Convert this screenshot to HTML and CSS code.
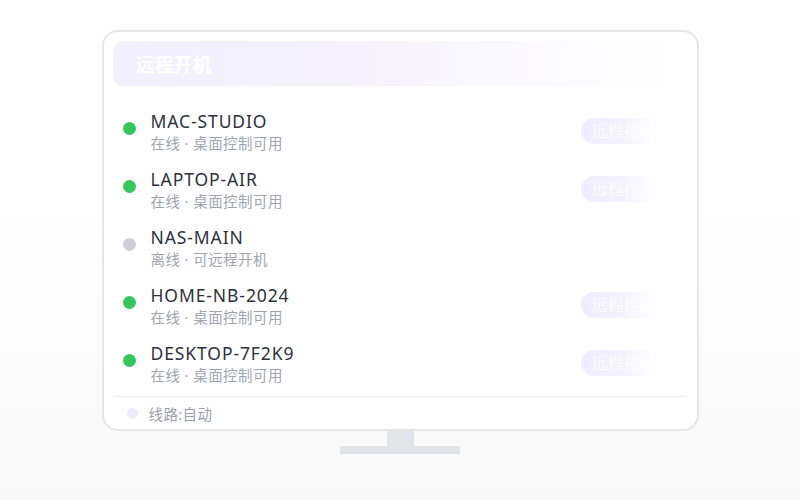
FILE: index.html
```html
<!DOCTYPE html>
<html lang="zh">
<head>
<meta charset="utf-8">
<link rel="stylesheet" href="styles.css">
</head>
<body>
<div class="stage">
  <div class="monitor">
    <div class="header">
      <span class="title">远程开机</span>
      <span class="count">4/5 在线</span>
    </div>
    <div class="list">
      <div class="row">
        <span class="dot on"></span>
        <div class="info"><div class="name">MAC-STUDIO</div><div class="sub">在线 · 桌面控制可用</div></div>
        <span class="btn">远程控制</span>
      </div>
      <div class="row">
        <span class="dot on"></span>
        <div class="info"><div class="name">LAPTOP-AIR</div><div class="sub">在线 · 桌面控制可用</div></div>
        <span class="btn">远程控制</span>
      </div>
      <div class="row">
        <span class="dot off"></span>
        <div class="info"><div class="name">NAS-MAIN</div><div class="sub">离线 · 可远程开机</div></div>
      </div>
      <div class="row">
        <span class="dot on"></span>
        <div class="info"><div class="name">HOME-NB-2024</div><div class="sub">在线 · 桌面控制可用</div></div>
        <span class="btn">远程控制</span>
      </div>
      <div class="row">
        <span class="dot on"></span>
        <div class="info"><div class="name">DESKTOP-7F2K9</div><div class="sub">在线 · 桌面控制可用</div></div>
        <span class="btn">远程控制</span>
      </div>
    </div>
    <div class="footer">
      <span class="fdot"></span>
      <span class="ftext">线路:自动</span>
    </div>
  </div>
  <div class="neck"></div>
  <div class="base"></div>
</div>
</body>
</html>
```

FILE: styles.css
```css
html, body {
  margin: 0;
  padding: 0;
}
body {
  width: 800px;
  height: 500px;
  background: linear-gradient(180deg, #ffffff 0%, #ffffff 40%, #f8f8f9 100%);
  font-family: "Noto Sans", "Noto Sans CJK SC", sans-serif;
  overflow: hidden;
}
.stage {
  display: flex;
  flex-direction: column;
  align-items: center;
  padding-top: 30px;
}
.monitor {
  box-sizing: border-box;
  width: 597px;
  height: 401px;
  border: 2px solid #e4e6ea;
  border-radius: 16px;
  background: #ffffff;
  padding: 9px 11px 0 9px;
  display: flex;
  flex-direction: column;
}
.header {
  height: 45px;
  border-radius: 10px;
  background: linear-gradient(90deg, #f2effe 0%, #f6f3ff 45%, #ffffff 98%);
  display: flex;
  align-items: center;
  justify-content: space-between;
  padding: 0 20px 0 23px;
}
.title {
  color: #ffffff;
  font-family: "Noto Sans CJK SC", sans-serif;
  font-weight: 700;
  font-size: 19px;
}
.count {
  color: #ffffff;
  font-family: "Noto Sans CJK SC", sans-serif;
  font-size: 13px;
  opacity: 0.8;
}
.list {
  margin-top: 16px;
  display: flex;
  flex-direction: column;
}
.row {
  height: 58px;
  display: flex;
  align-items: center;
  padding: 0 29px 0 10px;
}
.dot {
  width: 13px;
  height: 13px;
  border-radius: 50%;
  margin-right: 15px;
  margin-top: -5px;
  flex: none;
}
.dot.on { background: #34c759; }
.dot.off { background: #cdd0d6; }
.info {
  flex: 1;
  display: flex;
  flex-direction: column;
}
.name {
  font-size: 17.5px;
  line-height: 22px;
  color: #2e323a;
  letter-spacing: 0.9px;
}
.sub {
  font-family: "Noto Sans", "Noto Sans CJK SC", sans-serif;
  font-size: 14.5px;
  line-height: 20px;
  letter-spacing: 0.45px;
  margin-top: 1px;
  color: #a0a5ad;
}
.btn {
  width: 76px;
  height: 26px;
  border-radius: 13px;
  background: linear-gradient(90deg, #efecfe 0%, #f3f0ff 50%, #ffffff 100%);
  color: #ffffff;
  font-family: "Noto Serif CJK SC", serif;
  font-size: 16px;
  line-height: 26px;
  padding-left: 11px;
  box-sizing: border-box;
  white-space: nowrap;
  overflow: hidden;
}
.footer {
  margin-top: 4px;
  border-top: 1px solid #eeeff2;
  height: 32px;
  display: flex;
  align-items: center;
  padding-left: 13px;
  margin-left: 1px;
}
.fdot {
  width: 11px;
  height: 11px;
  border-radius: 50%;
  background: #eeebfd;
  margin-right: 11px;
}
.ftext {
  font-family: "Noto Sans", "Noto Sans CJK SC", sans-serif;
  font-size: 14.5px;
  letter-spacing: 0.4px;
  color: #9ca1aa;
}
.neck {
  width: 27px;
  height: 15px;
  background: #e1e4e8;
}
.base {
  width: 120px;
  height: 8px;
  background: #e1e4e8;
}
```
